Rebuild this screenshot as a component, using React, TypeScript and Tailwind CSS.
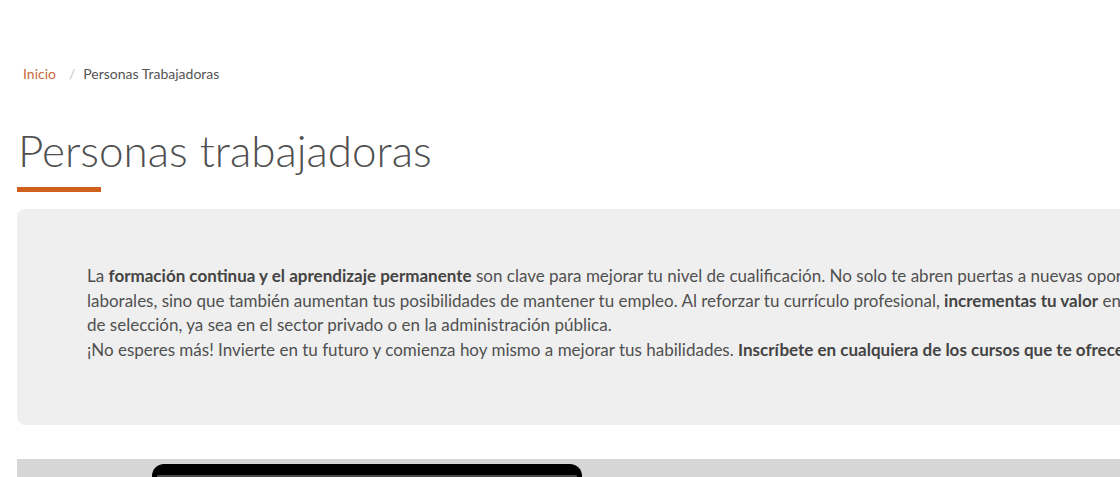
export default function App() {
  return (
    <div className="w-full h-[477px] overflow-hidden bg-white font-['Lato',sans-serif] text-[#555]">
      <div className="pl-[17px]">
        <nav className="pt-[64px] pl-[6px] flex items-center text-[14px] leading-[20px] whitespace-nowrap">
          <span className="text-[#c8693a]">Inicio</span>
          <span className="ml-[13px] mr-[8px] text-[#c4c4c4]">/</span>
          <span className="text-[#555]">Personas Trabajadoras</span>
        </nav>
        <h1 className="mt-[40px] ml-[1px] text-[44px] leading-[53px] font-light text-[#505050] whitespace-nowrap">
          Personas trabajadoras
        </h1>
        <div className="mt-[10px] w-[84px] h-[5px] bg-[#d0611c]" />
        <div className="mt-[17px] w-[1400px] h-[216px] rounded-lg bg-[#efefef] pt-[55px] pl-[70px] text-[17px] leading-[24.7px] text-[#505050] whitespace-nowrap">
          <p>
            <span className="block">
              La <strong className="font-bold text-[#444]">formación continua y el aprendizaje permanente</strong> son clave para mejorar tu nivel de cualificación. No solo te abren puertas a nuevas oportunidades
            </span>
            <span className="block">
              laborales, sino que también aumentan tus posibilidades de mantener tu empleo. Al reforzar tu currículo profesional, <strong className="font-bold text-[#444]">incrementas tu valor</strong> en los procesos
            </span>
            <span className="block">de selección, ya sea en el sector privado o en la administración pública.</span>
          </p>
          <p>
            ¡No esperes más! Invierte en tu futuro y comienza hoy mismo a mejorar tus habilidades. <strong className="font-bold text-[#444]">Inscríbete en cualquiera de los cursos que te ofrecemos.</strong>
          </p>
        </div>
        <div className="mt-[34px] w-[1400px] h-[60px] bg-[#d6d6d6] pt-[5px] pl-[135px]">
          <div className="w-[430px] h-[60px] rounded-t-[12px] bg-black pt-[11px] px-[5px]">
            <div className="h-full bg-[#4a4a4a]" />
          </div>
        </div>
      </div>
    </div>
  );
}
